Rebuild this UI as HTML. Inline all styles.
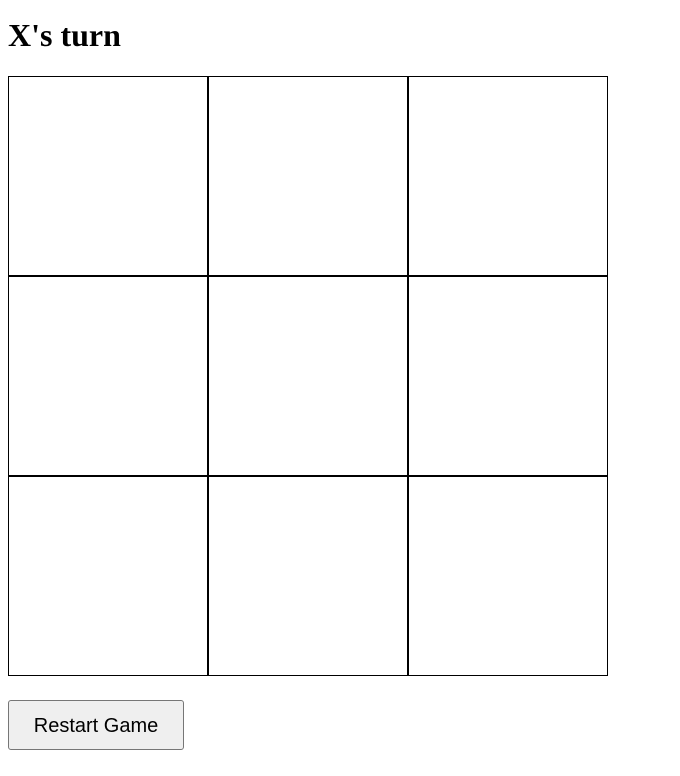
<!DOCTYPE html>
<html><head><style>
body{margin:0;background:#fff;}
h1{position:absolute;left:8px;top:15px;margin:0;font:bold 32px "Liberation Serif",serif;line-height:40px;color:#000;}
.grid{position:absolute;left:8px;top:76px;width:600px;height:600px;display:grid;grid-template-columns:200px 200px 200px;grid-template-rows:200px 200px 200px;}
.grid div{box-sizing:border-box;border:1px solid #000;background:#fff;}
button{position:absolute;left:8px;top:700px;width:176px;height:50px;box-sizing:border-box;border:1px solid #767676;border-radius:3px;background:#efefef;font:20px "Liberation Sans",sans-serif;color:#000;padding:2px 0 0 0;}
</style></head><body>
<h1>X's turn</h1>
<div class="grid"><div></div><div></div><div></div><div></div><div></div><div></div><div></div><div></div><div></div></div>
<button>Restart Game</button>
</body></html>
